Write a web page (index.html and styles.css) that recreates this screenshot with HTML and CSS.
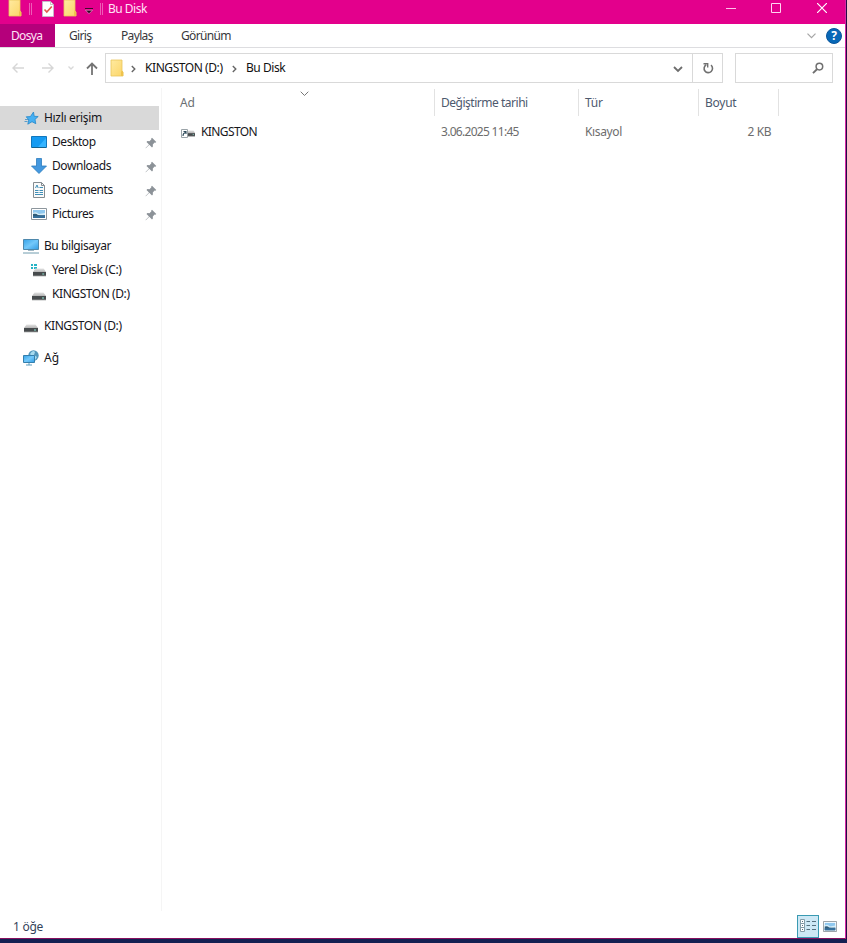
FILE: index.html
```html
<!DOCTYPE html>
<html lang="tr">
<head>
<meta charset="utf-8">
<title>Bu Disk</title>
<link rel="stylesheet" href="styles.css">
</head>
<body>
<svg class="defs" width="0" height="0">
  <defs>
    <linearGradient id="gold" x2="1" y2="1"><stop stop-color="#ffeaa0"/><stop offset="1" stop-color="#fbd567"/></linearGradient>
    <linearGradient id="blue" x2="1" y2="1"><stop stop-color="#36a3e8"/><stop offset=".5" stop-color="#73c8fa"/><stop offset="1" stop-color="#309be3"/></linearGradient>
    <linearGradient id="drive" x2="0" y2="1"><stop stop-color="#e4e4e4"/><stop offset="1" stop-color="#b4b4b4"/></linearGradient>
    <symbol id="folder" viewBox="0 0 14 18"><path d="M1 1h11v11l1 1v4H1z" fill="url(#gold)" stroke="#eac55b" stroke-width=".8"/><path d="M11 17v-4.500l1-1 1.200 1.500v4z" fill="#efc34d"/></symbol>
    <symbol id="pin" viewBox="0 0 12 12"><path d="M7 .7 11.300 5l-.9.7-.8-.1-1.800 1.900.1 2-.9.9-2.700-2.700L.8 11.300l-.3-.3L4 7.400 1.500 4.900l.9-.9 2.100.2 1.900-1.900-.2-.8z" fill="#8c9298"/></symbol>
    <symbol id="disk" viewBox="0 0 14 9" preserveAspectRatio="none"><path d="M2.500.5h9L14 4H0z" fill="url(#drive)"/><path d="M0 4h14v4H0z" fill="#474b4d"/><path d="M0 7.500h14v.8H0z" fill="#909393"/><path d="M10 5.500h2v1h-2z" fill="#8ee5d2"/></symbol>
    <symbol id="picture" viewBox="0 0 16 12" preserveAspectRatio="none"><path d="M.5.5h15v11H.5z" fill="#fff" stroke="#8d969d"/><path d="M2 2h12v8H2z" fill="#8fc8ef"/><path d="M2 5q3-2 6 1l6-1v5H2z" fill="#d5edf8"/><path d="M2 6q3-1 5 1l7 .5V10H2z" fill="#315d79"/><path d="M7 8l7-1v3H2V8z" fill="#346e9a"/></symbol>
  </defs>
</svg>
<div class="window">
  <header class="titlebar">
    <svg class="folder" width="14" height="18"><use href="#folder"/></svg>
    <i class="sep sep-a"></i>
    <svg class="check" width="12" height="16" viewBox="0 0 12 16"><path d="M.5.5h8l3 3v12H.5z" fill="#fff" stroke="#c9b5c9"/><path d="M8.500.5v3h3" fill="none" stroke="#aaa" stroke-width=".7"/><path d="m2.500 8.500 2.300 2.500 5-5.500" fill="none" stroke="#e15c4c" stroke-width="1.700"/></svg>
    <svg class="folder folder-b" width="14" height="18"><use href="#folder"/></svg>
    <svg class="quick" width="8" height="6" viewBox="0 0 8 6"><path d="M0 .5h8" stroke="#3d082b"/><path d="M.5 2.200h7L4 5.700z" fill="#28061e" stroke="#f6b5df" stroke-width=".6"/></svg>
    <i class="sep sep-b"></i>
    <span class="caption">Bu Disk</span>
    <div class="controls">
      <svg width="10" height="10"><path d="M0 5.500h10" stroke="#ffc2ec"/></svg>
      <svg width="10" height="10"><path d="M.5.500h9v9h-9z" fill="none" stroke="#ffd5f1"/></svg>
      <svg width="10" height="10"><path d="m0 0 10 10M10 0 0 10" stroke="#fff" stroke-width="1.200"/></svg>
    </div>
  </header>
  <nav class="tabs">
    <span class="tab file">Dosya</span>
    <span class="tab home">Giriş</span>
    <span class="tab share">Paylaş</span>
    <span class="tab view">Görünüm</span>
    <svg class="expand" width="9" height="6" viewBox="0 0 9 6"><path d="m.5.700 4 4 4-4" fill="none" stroke="#a5a5a5" stroke-width="1.200"/></svg>
    <span class="help">?</span>
  </nav>
  <div class="navrow">
    <svg class="back" width="12" height="10" viewBox="0 0 12 10"><path d="M12 5H1M5.500.5 1 5l4.500 4.500" fill="none" stroke="#d6d6d6" stroke-width="1.400"/></svg>
    <svg class="forward" width="12" height="10" viewBox="0 0 12 10"><path d="M0 5h11M6.500.5 11 5 6.500 9.500" fill="none" stroke="#d6d6d6" stroke-width="1.400"/></svg>
    <svg class="recent" width="6" height="4" viewBox="0 0 6 4"><path d="m.5.500 2.500 2.500L5.500.5" fill="none" stroke="#d8d8d8" stroke-width="1.300"/></svg>
    <svg class="up" width="12" height="13" viewBox="0 0 12 13"><path d="M6 13V1.500M1 6.500l5-5 5 5" fill="none" stroke="#747474" stroke-width="1.800"/></svg>
    <div class="address">
      <svg class="crumb-folder" width="14" height="18"><use href="#folder"/></svg>
      <svg class="chev chev-a" width="5" height="8" viewBox="0 0 5 8"><path d="m.8 1 3 3-3 3" fill="none" stroke="#666" stroke-width="1.400"/></svg>
      <span class="crumb drive">KINGSTON (D:)</span>
      <svg class="chev chev-b" width="5" height="8" viewBox="0 0 5 8"><path d="m.8 1 3 3-3 3" fill="none" stroke="#666" stroke-width="1.400"/></svg>
      <span class="crumb place">Bu Disk</span>
      <svg class="dropdown" width="10" height="7" viewBox="0 0 10 7"><path d="m1 1 4 4 4-4" fill="none" stroke="#6d6d6d" stroke-width="1.800"/></svg>
      <div class="refresh"><svg width="12" height="12" viewBox="0 0 12 12"><path d="M9 3.200A4.200 4.200 0 1 1 4.200 2.800" fill="none" stroke="#707070" stroke-width="1.600"/><path d="M1.500 1.700h4.200v3.800" fill="none" stroke="#707070" stroke-width="1.400"/></svg></div>
    </div>
    <div class="search"><svg width="12" height="12" viewBox="0 0 12 12"><circle cx="7.400" cy="4.600" r="3.300" fill="none" stroke="#707070" stroke-width="1.500"/><path d="M5.200 7 1 11.200" stroke="#707070" stroke-width="1.900"/></svg></div>
  </div>
  <div class="body">
    <aside class="tree">
      <div class="item top selected"><svg width="16" height="16" viewBox="0 0 16 16"><path d="m10.500 2 .7 4.300 4 .2-3.200 2.900.8 4.300-3.800-2-4.200 2.500 1-4.400-2.600-3 4.200-.2z" fill="#46b0f3" stroke="#2587c9" stroke-width=".8"/><path d="M2 9.500h4M1.500 11.500h3" stroke="#3b8ec6" stroke-width=".8"/></svg><span>Hızlı erişim</span></div>
      <div class="item"><svg width="16" height="16" viewBox="0 0 16 16"><path d="M.5 2.500h15v11H.5z" fill="#159bf2" stroke="#1177bd"/><path d="M7 13 15 4v9z" fill="#36b4ff"/><path d="M1 13.500h14" stroke="#15628e"/></svg><span>Desktop</span><svg class="pin" width="12" height="12"><use href="#pin"/></svg></div>
      <div class="item"><svg width="16" height="16" viewBox="0 0 16 16"><path d="M5.500.5h5V8h5L8 15.500.5 8h5z" fill="#4498df" stroke="#2c7cbe" stroke-width=".8"/></svg><span>Downloads</span><svg class="pin" width="12" height="12"><use href="#pin"/></svg></div>
      <div class="item"><svg width="16" height="16" viewBox="0 0 16 16"><path d="M2.500.5h8l3 3v12h-11z" fill="#fafafa" stroke="#858c91"/><path d="M10.500.5v3h3" fill="none" stroke="#858c91"/><path d="m4.500 6 1.500-3 1.200 3M8.500 5.500H12M4 8.500h3.500m1 0H12M4 10.500h3.500m1 0H12M4 12.500h8" fill="none" stroke="#408fb7"/></svg><span>Documents</span><svg class="pin" width="12" height="12"><use href="#pin"/></svg></div>
      <div class="item"><svg width="16" height="12"><use href="#picture"/></svg><span>Pictures</span><svg class="pin" width="12" height="12"><use href="#pin"/></svg></div>
      <div class="item top gap"><svg width="16" height="16" viewBox="0 0 16 16"><path d="M.5 1.500h15v10H.5z" fill="url(#blue)" stroke="#4e88ac"/><path d="M5 12.500h6" stroke="#a1b9c6"/><path d="M0 15h16" stroke="#719cae"/></svg><span>Bu bilgisayar</span></div>
      <div class="item"><svg width="16" height="16" viewBox="0 0 16 16"><path d="M0 2h2v2H0zm3 0h3v2H3zM0 5h2v2H0zm3 0h3v2H3z" fill="#25b4c6"/><svg x="2" y="6" width="13" height="9"><use href="#disk"/></svg></svg><span>Yerel Disk (C:)</span></div>
      <div class="item"><svg width="16" height="16" viewBox="0 0 16 16"><svg x="1" y="6" width="14" height="9"><use href="#disk"/></svg></svg><span>KINGSTON (D:)</span></div>
      <div class="item top gap"><svg width="16" height="16" viewBox="0 0 16 16"><svg x="1" y="6" width="14" height="9"><use href="#disk"/></svg></svg><span>KINGSTON (D:)</span></div>
      <div class="item top gap"><svg width="16" height="16" viewBox="0 0 16 16"><circle cx="10.500" cy="5.500" r="5.200" fill="#5296bb"/><path d="M7 4q3-5 5-2l-1 3 3 2-2 3" fill="#a8dbef"/><path d="M.5 5.500h11v7H.5z" fill="url(#blue)" stroke="#347fac"/><path d="M6 13v2M3 15h6" stroke="#5e9dbd"/></svg><span class="network">Ağ</span></div>
    </aside>
    <main class="list">
      <div class="row heads">
        <div class="cell name"><span>Ad</span><svg class="sort" width="9" height="6" viewBox="0 0 9 6"><path d="m.7.700 3.800 3.800L8.300.7" fill="none" stroke="#777"/></svg></div>
        <div class="cell"><span class="h-date">Değiştirme tarihi</span></div>
        <div class="cell kind">Tür</div>
        <div class="cell size">Boyut</div>
      </div>
      <div class="row entry">
        <div class="cell name"><svg width="16" height="16" viewBox="0 0 16 16"><svg x="7" y="6" width="8" height="7"><use href="#disk"/></svg><path d="M1.500 5.500h6v8h-6z" fill="#fff" stroke="#9aa3a8"/><path d="M3 12q0-3 2.500-3.500M3.500 7.500H6V10" fill="none" stroke="#304d5d" stroke-width="1.100"/></svg><span class="file-name">KINGSTON</span></div>
        <div class="cell"><span class="date">3.06.2025 11:45</span></div>
        <div class="cell"><span class="type">Kısayol</span></div>
        <div class="cell bytes">2 KB</div>
      </div>
    </main>
  </div>
  <footer class="status">
    <span class="count">1 öğe</span>
    <div class="details"><svg width="16" height="14" viewBox="0 0 16 14"><path d="M.5.500h4v4h-4zm0 4h4v4h-4zm0 4h4v4h-4z" fill="#fff" stroke="#849ca8"/><path d="M2 2.500h1m-1 4h1m-1 4h1M6.500 2.500H10m2 0h4m-9.500 4H10m2 0h4m-9.500 4H10m2 0h4" stroke="#55717f"/></svg></div>
    <svg class="thumbs" width="14" height="11"><use href="#picture"/></svg>
  </footer>
</div>
</body>
</html>
```

FILE: styles.css
```css
* { box-sizing: border-box; }
body { margin: 0; font: 12px/16px "Noto Sans", "Open Sans", sans-serif; color: #16161c; background: #142052; letter-spacing: -.25px; }
svg { display: block; flex: none; }
span { white-space: nowrap; }
.defs { position: absolute; }
.window { width: 846px; height: 939px; background: #fff; border-right: 1px solid #d629a4; border-bottom: 1px solid #87105f; display: flex; flex-direction: column; box-shadow: 1px 0 #250a45; }
.titlebar { height: 24px; flex: none; display: flex; background: #e3008c; color: #ffe1f5; }
.folder { margin: -1px 0 0 8px; }
.folder-b { margin-left: 9px; }
.sep { width: 3px; height: 12px; margin-top: 3px; border-left: 1px solid #f27bc6; border-right: 1px solid #f27bc6; opacity: .75; }
.sep-a { margin-left: 7px; }
.sep-b { margin-left: 7px; }
.check { margin: 1px 0 0 10px; }
.quick { margin: 8px 0 0 8px; }
.caption { margin: 1px 0 0 5px; letter-spacing: -.5px; }
.controls { display: flex; gap: 35px; margin: 3px 18px 0 auto; }
.controls svg:last-child { margin-left: 1px; }
.tabs { height: 24px; flex: none; display: flex; align-items: center; border-bottom: 1px solid #dddde0; color: #38383c; }
.tab { line-height: 24px; height: 23px; letter-spacing: -.65px; }
.file { width: 55px; padding-left: 11px; background: #b5007b; color: #ffe4f6; }
.home { width: 52px; padding-left: 14px; }
.share { width: 60px; padding-left: 14px; }
.view { padding-left: 14px; }
.expand { margin-left: auto; }
.help { width: 16px; height: 16px; margin: 0 3px 0 10px; border-radius: 50%; background: #0868b7; border: 1px solid #0a559c; color: white; line-height: 14px; font-weight: 700; text-align: center; }
.navrow { height: 40px; flex: none; display: flex; align-items: center; }
.back { margin-left: 12px; }
.forward { margin-left: 18px; }
.recent { margin-left: 14px; }
.up { margin: 1px 0 0 12px; }
.address { display: flex; align-items: center; width: 618px; height: 30px; margin-left: 7px; border: 1px solid #d9d9d9; color: #111; }
.crumb-folder { margin-left: 4px; }
.chev-a { margin: 1px 0 0 7px; }
.drive { width: 79px; margin-left: 9px; letter-spacing: -.43px; }
.chev-b { margin: 1px 0 0 8px; }
.place { margin-left: 9px; letter-spacing: -.45px; }
.dropdown { margin: 3px 9px 0 auto; }
.refresh { width: 30px; height: 28px; border-left: 1px solid #d9d9d9; display: grid; place-items: center; }
.search { width: 98px; height: 30px; margin-left: 12px; border: 1px solid #d9d9d9; display: flex; align-items: center; justify-content: flex-end; padding-right: 8px; }
.body { flex: 1; display: flex; min-height: 0; }
.tree { width: 162px; height: 823px; padding-top: 18px; border-right: 1px solid #f5f5f5; letter-spacing: -.43px; }
.item { height: 24px; width: 159px; display: flex; align-items: center; gap: 5px; padding: 0 2px 0 31px; }
.item.top { padding-left: 23px; }
.item.gap { margin-top: 8px; }
.selected { background: #d9d9d9; letter-spacing: -.33px; }
.network { letter-spacing: 0; }
.pin { margin: 1px 0 0 auto; }
.list { flex: 1; }
.row { display: grid; grid-template-columns: 273px 144px 120px 80px; }
.heads { height: 28px; padding-top: 1px; color: #4d596e; }
.heads .cell { border-right: 1px solid #e2e2e2; padding: 6px 0 0 6px; position: relative; }
.heads .name { padding-left: 18px; color: #6b6f74; }
.h-date { letter-spacing: -.48px; }
.sort { position: absolute; left: 138px; top: 2px; }
.entry { margin-top: 4px; height: 24px; color: #6d6d6d; align-items: center; }
.entry .cell { padding-left: 6px; }
.entry .name { display: flex; gap: 5px; padding-left: 18px; color: #18181c; }
.file-name { letter-spacing: -.6px; }
.date { letter-spacing: -.7px; }
.type { letter-spacing: -.35px; }
.entry .bytes { text-align: right; padding-right: 8px; letter-spacing: -.45px; }
.status { height: 24px; flex: none; display: flex; align-items: center; padding-left: 13px; color: #34435a; }
.count { margin-top: 2px; }
.details { margin-left: auto; width: 22px; height: 23px; border: 1px solid #3a9ab2; background: #cde8f5; display: grid; place-items: center; }
.thumbs { margin: 0 8px 0 4px; }
```
